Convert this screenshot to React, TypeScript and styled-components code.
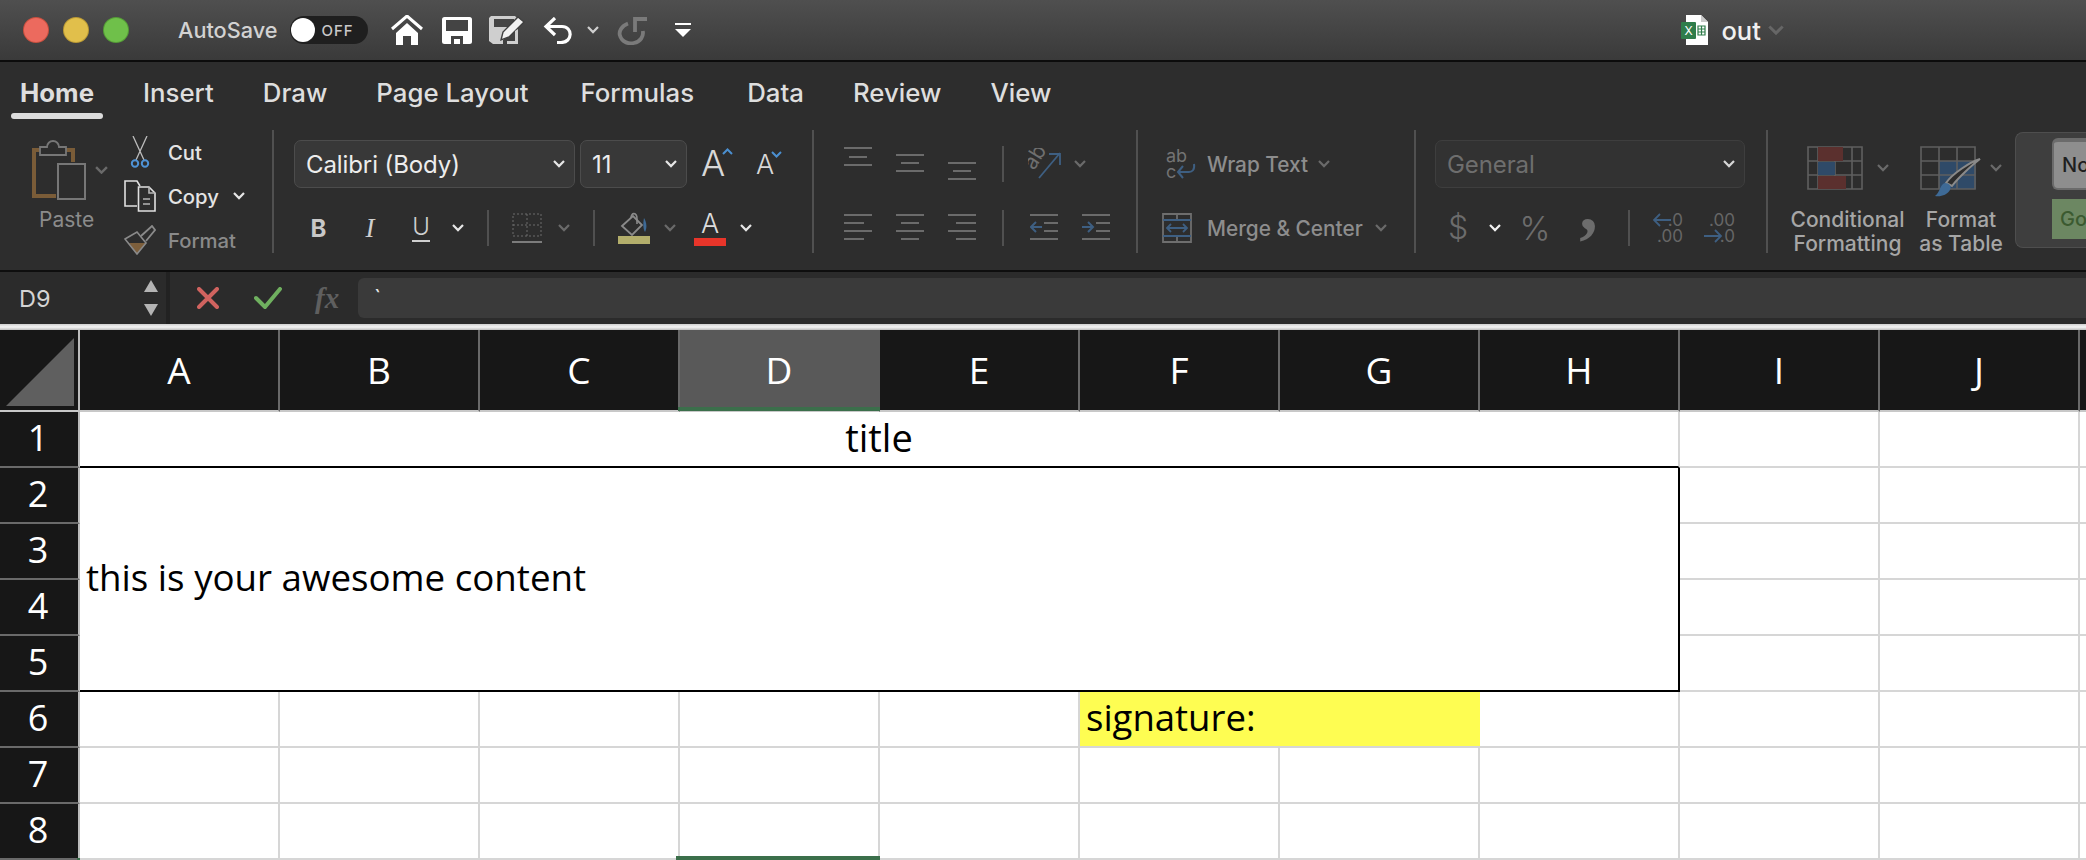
import React from "react";
import styled, { createGlobalStyle } from "styled-components";

const GlobalStyle = createGlobalStyle`
  html, body { margin: 0; padding: 0; background: #fff; }
  body { width: 2086px; height: 860px; overflow: hidden; font-family: Inter, "Liberation Sans", sans-serif; }
`;

const Window = styled.div`
  width: 2086px;
  height: 860px;
  overflow: hidden;
  display: flex;
  flex-direction: column;
`;

/* title bar */
const TitleBar = styled.div`
  height: 62px;
  flex: none;
  display: flex;
  align-items: center;
  padding-left: 24px;
  background: linear-gradient(#4f4f4f, #3a3a3a);
  border-bottom: 2px solid #0c0c0c;
  box-sizing: border-box;
`;
const Light = styled.span<{ $c: string; $e: string }>`
  width: 24px;
  height: 24px;
  border-radius: 50%;
  margin-right: 16px;
  background: ${(p) => p.$c};
  box-shadow: 0 0 0 1px ${(p) => p.$e};
`;
const AutoSave = styled.span`
  margin-left: 34px;
  font-size: 21.7px;
  font-weight: 500;
  color: #d2d2d2;
`;
const Toggle = styled.span`
  margin-left: 13px;
  width: 78px;
  height: 28px;
  border-radius: 14px;
  background: #1f1f1f;
  display: flex;
  align-items: center;
  position: relative;
  color: #c9c9c9;
  font-size: 15px;
  font-weight: 500;
  padding-left: 31px;
  box-sizing: border-box;
  letter-spacing: 1px;
  &::before {
    content: "";
    position: absolute;
    left: 1px;
    top: 2px;
    width: 24px;
    height: 24px;
    border-radius: 50%;
    background: #fff;
  }
`;
const QuickIcon = styled.span<{ $ml: number; $w: number }>`
  margin-left: ${(p) => p.$ml}px;
  width: ${(p) => p.$w}px;
  flex: none;
  display: flex;
  align-items: center;
  justify-content: center;
`;
const DocName = styled.span`
  margin-left: 12px;
  font-size: 25.5px;
  font-weight: 500;
  color: #f0f0f0;
`;

/* tabs */
const TabBar = styled.div`
  height: 60px;
  flex: none;
  display: flex;
  align-items: center;
  gap: 49px;
  padding: 0 0 0 20px;
  background: #2d2d2d;
  box-sizing: border-box;
`;
const Tab = styled.span<{ $active?: boolean; $ml?: number }>`
  position: relative;
  margin-left: ${(p) => p.$ml ?? 0}px;
  font-size: 25.8px;
  font-weight: ${(p) => (p.$active ? 700 : 500)};
  color: #dedede;
  white-space: nowrap;
  ${(p) =>
    p.$active &&
    `&::after {
      content: "";
      position: absolute;
      left: -9px;
      right: -9px;
      bottom: -11px;
      height: 6px;
      border-radius: 3px;
      background: #dcdcdc;
    }`}
`;

/* ribbon */
const Ribbon = styled.div`
  height: 148px;
  flex: none;
  display: flex;
  padding-top: 8px;
  box-sizing: border-box;
  background: #2d2d2d;
  overflow: hidden;
`;
const Group = styled.div<{ $w: number; $pl: number; $pt?: number; $last?: boolean }>`
  width: ${(p) => p.$w}px;
  height: 123px;
  flex: none;
  box-sizing: border-box;
  padding-left: ${(p) => p.$pl}px;
  padding-top: ${(p) => p.$pt ?? 0}px;
  border-right: ${(p) => (p.$last ? "none" : "2px solid #505050")};
`;
const Tools = styled.div<{ $h?: number; $mt?: number }>`
  display: flex;
  align-items: center;
  height: ${(p) => p.$h ?? 36}px;
  margin-top: ${(p) => p.$mt ?? 0}px;
`;
const Slot = styled.span<{ $ml?: number; $w: number; $start?: boolean }>`
  margin-left: ${(p) => p.$ml ?? 0}px;
  width: ${(p) => p.$w}px;
  flex: none;
  display: flex;
  align-items: center;
  justify-content: ${(p) => (p.$start ? "flex-start" : "center")};
`;
const MiniSep = styled.span<{ $ml: number }>`
  margin-left: ${(p) => p.$ml}px;
  width: 2px;
  height: 36px;
  flex: none;
  background: #505050;
`;
const Select = styled.div<{ $w: number; $ml?: number; $dim?: boolean }>`
  width: ${(p) => p.$w}px;
  margin-left: ${(p) => p.$ml ?? 0}px;
  height: 48px;
  flex: none;
  box-sizing: border-box;
  display: flex;
  align-items: center;
  justify-content: space-between;
  padding: 0 9px 0 11px;
  border-radius: 7px;
  background: ${(p) => (p.$dim ? "#323232" : "#383838")};
  border: 1px solid ${(p) => (p.$dim ? "#3e3e3e" : "#4c4c4c")};
  color: ${(p) => (p.$dim ? "#6e6e6e" : "#ededed")};
  font-size: 24px;
  letter-spacing: -0.1px;
`;
const ClipboardCol = styled.div<{ $ml?: number }>`
  display: flex;
  flex-direction: column;
  margin-left: ${(p) => p.$ml ?? 0}px;
`;
const PasteTop = styled.div`
  display: flex;
  align-items: center;
  gap: 9px;
  margin-top: 10px;
`;
const PasteLabel = styled.span`
  font-size: 21px;
  color: #8b8b8b;
  margin: 7px 0 0 7px;
`;
const ClipRow = styled.div`
  display: flex;
  align-items: center;
  height: 44px;
  gap: 12px;
`;
const ClipIcon = styled.span`
  width: 32px;
  display: flex;
  justify-content: center;
`;
const ClipLabel = styled.span<{ $dim?: boolean }>`
  font-size: 20.3px;
  font-weight: 500;
  color: ${(p) => (p.$dim ? "#8a8a8a" : "#e4e4e4")};
`;
const GroupRow = styled.div`
  display: flex;
`;
const BoldLetter = styled.span`
  font-size: 24px;
  font-weight: 700;
  color: #c8c8c8;
`;
const ItalicLetter = styled.span`
  font-family: "Liberation Serif", serif;
  font-style: italic;
  font-size: 27px;
  color: #cfcfcf;
`;
const UnderLetter = styled.span`
  font-size: 24px;
  font-weight: 300;
  line-height: 26px;
  color: #cfcfcf;
  border-bottom: 2px solid #cfcfcf;
  width: 100%;
  text-align: center;
`;
const ColorA = styled.span`
  display: flex;
  flex-direction: column;
  align-items: center;
  width: 100%;
  font-size: 27px;
  font-weight: 300;
  line-height: 28px;
  color: #dcdcdc;
  &::after {
    content: "";
    width: 100%;
    height: 8px;
    background: #e8352a;
  }
`;
const SizeLetter = styled.span<{ $s: number; $mt?: number }>`
  font-size: ${(p) => p.$s}px;
  font-weight: 300;
  line-height: 1;
  margin-top: ${(p) => p.$mt ?? 0}px;
  color: #d8d8d8;
`;
const FontSize = styled.span`
  display: flex;
  align-items: flex-start;
  & > svg {
    margin-left: -3px;
  }
`;
const WrapLabel = styled.span`
  font-size: 20.8px;
  font-weight: 500;
  color: #8d8d8d;
  white-space: nowrap;
`;
const NumGlyph = styled.span<{ $s: number }>`
  font-size: ${(p) => p.$s}px;
  font-weight: 300;
  line-height: 1;
  color: #6c6c6c;
`;
const CommaGlyph = styled.span`
  font-family: "Liberation Serif", serif;
  font-size: 74px;
  line-height: 36px;
  height: 36px;
  font-weight: 700;
  margin-top: -46px;
  color: #6c6c6c;
`;
const LargeButton = styled.div<{ $w: number }>`
  width: ${(p) => p.$w}px;
  flex: none;
  display: flex;
  flex-direction: column;
  align-items: center;
  margin-right: 16px;
`;
const LargeIcon = styled.div`
  display: flex;
  align-items: center;
  gap: 14px;
  height: 44px;
  margin-top: 16px;
`;
const LargeLabel = styled.div`
  font-size: 21px;
  font-weight: 500;
  line-height: 24px;
  color: #a6a6a6;
  text-align: center;
  white-space: nowrap;
  margin-top: 18px;
`;
const StylesPanel = styled.div`
  flex: 1;
  height: 116px;
  margin-top: 2px;
  box-sizing: border-box;
  padding: 5px 0 0 36px;
  background: #3e3e3e;
  border: 1px solid #4e4e4e;
  border-right: none;
  border-radius: 8px 0 0 8px;
  display: flex;
  flex-direction: column;
  gap: 9px;
`;
const NormalChip = styled.div`
  height: 52px;
  box-sizing: border-box;
  padding-left: 8px;
  display: flex;
  align-items: center;
  border-radius: 6px 0 0 6px;
  background: #8e8e8e;
  border: 2px solid #6b6b6b;
  border-top-width: 4px;
  border-right: none;
  color: #1f1f1f;
  font-size: 20px;
  font-weight: 500;
`;
const GoodChip = styled.div`
  height: 40px;
  padding-left: 8px;
  display: flex;
  align-items: center;
  background: #6c8762;
  color: #3b5a30;
  font-size: 20px;
  font-weight: 500;
`;

/* formula bar */
const FormulaBar = styled.div`
  height: 54px;
  flex: none;
  display: flex;
  align-items: center;
  background: #2b2b2b;
  border-top: 2px solid #0e0e0e;
  box-sizing: border-box;
`;
const NameBox = styled.div`
  width: 170px;
  height: 100%;
  flex: none;
  box-sizing: border-box;
  padding: 0 8px 0 19px;
  display: flex;
  align-items: center;
  justify-content: space-between;
  border-right: 4px solid #222;
  font-size: 23.5px;
  color: #d4d4d4;
`;
const Stepper = styled.span`
  display: flex;
  flex-direction: column;
  gap: 12px;
`;
const FxLabel = styled.span`
  margin-left: 33px;
  width: 30px;
  font-family: "Liberation Serif", serif;
  font-style: italic;
  font-weight: 700;
  font-size: 29px;
  color: #5f5f5f;
`;
const FormulaInput = styled.div`
  margin-left: 13px;
  flex: 1;
  height: 40px;
  padding-left: 16px;
  display: flex;
  align-items: center;
  background: #3a3a3a;
  border-radius: 6px 0 0 6px;
  font-size: 22px;
  color: #e8e8e8;
`;
const SheetEdge = styled.div`
  height: 6px;
  flex: none;
  background: linear-gradient(#cfcfcf, #f4f4f4 50%, #bdbdbd);
`;

/* sheet */
const Sheet = styled.div`
  flex: 1;
  display: grid;
  grid-template-columns: 80px repeat(11, 200px);
  grid-template-rows: 82px repeat(8, 56px);
  overflow: hidden;
  background: #fff;
  font-family: "Open Sans", Lato, sans-serif;
`;
const Corner = styled.div`
  background: #171717;
  box-sizing: border-box;
  border-right: 2px solid #bcbcbc;
  border-bottom: 2px solid #c8c8c8;
  display: flex;
  align-items: flex-end;
  padding: 0 4px 4px 6px;
`;
const ColHead = styled.div<{ $selected?: boolean }>`
  position: relative;
  box-sizing: border-box;
  display: flex;
  align-items: center;
  justify-content: center;
  padding-bottom: 2px;
  background: ${(p) => (p.$selected ? "#595959" : "#171717")};
  border-right: 2px solid ${(p) => (p.$selected ? "#595959" : "#696969")};
  border-bottom: 2px solid #c8c8c8;
  color: #fff;
  font-size: 37px;
  ${(p) =>
    p.$selected &&
    `&::after {
      content: "";
      position: absolute;
      left: -2px;
      right: -2px;
      bottom: -1px;
      height: 4px;
      background: #3b6f4b;
    }`}
`;
const RowHead = styled.div<{ $mark?: boolean }>`
  position: relative;
  box-sizing: border-box;
  display: flex;
  align-items: center;
  justify-content: center;
  padding: 0 2px 4px 0;
  background: #171717;
  border-right: 2px solid #bcbcbc;
  border-bottom: 2px solid #6a6a6a;
  color: #fff;
  font-size: 36px;
  ${(p) =>
    p.$mark &&
    `&::after {
      content: "";
      position: absolute;
      right: -2px;
      bottom: -2px;
      width: 3px;
      height: 2px;
      background: #3b6f4b;
    }`}
`;
const Cell = styled.div<{ $r: number; $c: number; $edge?: boolean }>`
  position: relative;
  box-sizing: border-box;
  grid-row: ${(p) => p.$r};
  grid-column: ${(p) => p.$c};
  border-right: 2px solid #d6d6d6;
  border-bottom: 2px solid #d6d6d6;
  ${(p) =>
    p.$edge &&
    `&::after {
      content: "";
      position: absolute;
      left: -4px;
      right: -2px;
      bottom: -2px;
      height: 4px;
      background: #3b6f4b;
    }`}
`;
const TitleCell = styled.div`
  grid-row: 2;
  grid-column: 2 / span 8;
  box-sizing: border-box;
  display: flex;
  align-items: center;
  justify-content: center;
  padding-bottom: 5px;
  border-bottom: 2px solid #000;
  border-right: 2px solid #d6d6d6;
  font-size: 38px;
  color: #000;
`;
const ContentCell = styled.div`
  grid-row: 3 / span 4;
  grid-column: 2 / span 8;
  box-sizing: border-box;
  display: flex;
  align-items: center;
  padding: 0 0 5px 6px;
  margin-left: -2px;
  border-left: 2px solid #000;
  border-right: 2px solid #000;
  border-bottom: 2px solid #000;
  font-size: 36.7px;
  color: #000;
`;
const SignatureCell = styled.div`
  grid-row: 7;
  grid-column: 7 / span 2;
  box-sizing: border-box;
  display: flex;
  align-items: center;
  margin-left: -2px;
  padding: 0 0 5px 8px;
  background: #fefd52;
  border-bottom: 2px solid #d6d6d6;
  font-size: 36.5px;
  color: #000;
`;

/* drawings */
const Chev = ({ c = "#cfcfcf", w = 12 }: { c?: string; w?: number }) => (
  <svg width={w} height={w * 0.6} viewBox="0 0 12 7" fill="none" stroke={c} strokeWidth="2.2">
    <path d="M1 1l5 5 5-5" />
  </svg>
);
const HomeIcon = () => (
  <svg width="32" height="30" viewBox="0 0 32 30" fill="#fff">
    <path d="M1 14 16 1l15 13" fill="none" stroke="#fff" strokeWidth="3" />
    <path d="M5 18 16 8l11 10v12h-7v-9h-8v9H5z" />
  </svg>
);
const SaveIcon = () => (
  <svg width="30" height="27" viewBox="0 0 30 27">
    <rect width="30" height="27" rx="2.5" fill="#fff" />
    <rect x="4" y="3" width="22" height="11" fill="#444" />
    <path d="M9 27v-8h12v8h-3v-5h-6v5z" fill="#444" />
  </svg>
);
const SaveEditIcon = () => (
  <svg width="36" height="28" viewBox="0 0 36 28">
    <path d="M2 0h24l3 3v8L14 24v4H4l-4-3V2z" fill="#cfcfcf" />
    <rect x="5" y="3" width="20" height="8" fill="#454545" />
    <path d="M29 1l6 5-15 15-8 3 2-8z" fill="#f2f2f2" stroke="#3f3f3f" strokeWidth="1.4" />
    <path d="M29 13v15H18v-3h8V15z" fill="#cfcfcf" />
  </svg>
);
const UndoIcon = () => (
  <svg width="30" height="27" viewBox="0 0 30 27" fill="none" stroke="#fff" strokeWidth="3.2">
    <path d="M12 1 3 9.500l9 8.500" />
    <path d="M3 9.500h16c11 0 11 16-1 16h-4" />
  </svg>
);
const RedoIcon = () => (
  <svg width="31" height="29" viewBox="0 0 31 29" fill="none" stroke="#7a7a7a" strokeWidth="3.8">
    <path d="M30 3H18v13" />
    <path d="M11 7.500C4 10 2 16 2.800 19c2 8 10 9 14 8 7-1.500 10-7 9-12" />
  </svg>
);
const MoreIcon = () => (
  <svg width="16" height="14" viewBox="0 0 16 14" fill="#fff">
    <rect width="16" height="2" />
    <path d="M0 6h16l-8 8z" />
  </svg>
);
const XlsIcon = () => (
  <svg width="28" height="30" viewBox="0 0 28 30">
    <path d="M5 0h15l7 7v23H5z" fill="#fff" />
    <path d="M20 0v7h7z" fill="#c9c9c9" />
    <rect y="7" width="15" height="17" rx="1" fill="#2f7d4b" />
    <text x="7.500" y="20" fontSize="12" fontFamily="Inter" fill="#fff" textAnchor="middle">X</text>
    <path d="M17 11h7v9h-7zM17 14h7M17 17h7M20.500 11v9" fill="none" stroke="#2f7d4b" strokeWidth="1.200" />
  </svg>
);
const PasteIcon = () => (
  <svg width="54" height="60" viewBox="0 0 54 60" fill="none">
    <path d="M8 10H2v46h22M34 10h7v12" stroke="#7a5c38" strokeWidth="4" />
    <path d="M8 15V7h7a6 6 0 0 1 12 0h7v8z" stroke="#777" strokeWidth="1.800" />
    <rect x="26" y="24" width="27" height="35" stroke="#777" strokeWidth="2" />
  </svg>
);
const ScissorsIcon = () => (
  <svg width="20" height="32" viewBox="0 0 20 32" fill="none">
    <path d="M3 0l11 24M17 0 6 24" stroke="#bdbdbd" strokeWidth="1.300" />
    <circle cx="5" cy="27.500" r="3.200" stroke="#4f93d6" strokeWidth="2" />
    <circle cx="15" cy="27.500" r="3.200" stroke="#4f93d6" strokeWidth="2" />
  </svg>
);
const CopyIcon = () => (
  <svg width="32" height="32" viewBox="0 0 32 32" fill="none" stroke="#e0e0e0" strokeWidth="1.600">
    <path d="M13 26H1V1h12l3 5" />
    <path d="M14.500 7H25l6 6v18H14.500z" />
    <path d="M25 7v6h6M19 19h7M19 24h7" stroke="#b5b5b5" />
  </svg>
);
const BrushIcon = () => (
  <svg width="32" height="30" viewBox="0 0 32 30" fill="none">
    <path d="M5 18l8 11 9-11z" fill="#7d5f3c" />
    <path d="M1 14 13 7l9 11-9 11z" stroke="#8a8a8a" strokeWidth="1.600" />
    <path d="M17 11 28 1l3 4-9 11" stroke="#8a8a8a" strokeWidth="1.800" />
  </svg>
);
const BordersIcon = () => (
  <svg width="30" height="30" viewBox="0 0 30 30" fill="none" stroke="#6d6d6d">
    <rect x="1" y="1" width="28" height="22" strokeDasharray="2 2" />
    <path d="M15 1v22M1 12h28" strokeDasharray="2 2" />
    <path d="M0 29h30" strokeWidth="2" stroke="#7c7c7c" />
  </svg>
);
const FillIcon = () => (
  <svg width="32" height="32" viewBox="0 0 32 32" fill="none">
    <path d="M4 14 15 4l9 9-10 10z" stroke="#8a8a8a" strokeWidth="1.800" />
    <path d="M13 6c0-6 6-6 6 1v5" stroke="#8a8a8a" strokeWidth="1.600" />
    <path d="M26 6c3 5 3 10 1 14-2-3-2-9-1-14z" fill="#3e6a96" />
    <rect y="24" width="32" height="8" fill="#b3ae6b" />
  </svg>
);
const Caret = ({ up }: { up?: boolean }) => (
  <svg width="11" height="7" viewBox="0 0 11 7" fill="none" stroke="#4b8fd0" strokeWidth="2">
    <path d={up ? "M1 6l4.500-4.500L10 6" : "M1 1l4.500 4.500L10 1"} />
  </svg>
);
const LinesIcon = ({ ys, align }: { ys: number[]; align: "left" | "center" | "right" }) => (
  <svg width="28" height="36" viewBox="0 0 28 36" stroke="#6b6b6b" strokeWidth="2">
    {ys.map((y, i) => {
      const short = i % 2 === 1;
      const x1 = !short || align === "left" ? 0 : align === "center" ? 5 : 8;
      const x2 = !short ? 28 : align === "left" ? 20 : align === "center" ? 23 : 28;
      return <line key={y} x1={x1} x2={x2} y1={y} y2={y} />;
    })}
  </svg>
);
const OrientIcon = () => (
  <svg width="34" height="32" viewBox="0 0 34 32" fill="none">
    <text x="0" y="0" transform="translate(6 23) rotate(-58)" fontFamily="Inter" fontSize="21" fill="#6f6f6f">ab</text>
    <path d="M11 30 32 5M21 6h11v11" stroke="#3e5f82" strokeWidth="1.800" />
  </svg>
);
const IndentIcon = ({ out }: { out?: boolean }) => (
  <svg width="28" height="36" viewBox="0 0 28 36" fill="none">
    <path d="M0 5h28M0 29h28M14 13h14M14 21h14" stroke="#6b6b6b" strokeWidth="2" />
    <path d={out ? "M12 17H1M6 12l-5 5 5 5" : "M0 17h11M6 12l5 5-5 5"} stroke="#3e5f82" strokeWidth="2" />
  </svg>
);
const WrapIcon = () => (
  <svg width="30" height="31" viewBox="0 0 30 31" fill="none">
    <text x="0" y="13" fontFamily="Inter" fontSize="18" fill="#737373">ab</text>
    <text x="0" y="29" fontFamily="Inter" fontSize="18" fill="#737373">c</text>
    <path d="M28 15c1 6-2 8-5 8H12M17 17l-5 6 5 6" stroke="#3e5f82" strokeWidth="2" />
  </svg>
);
const MergeIcon = () => (
  <svg width="30" height="30" viewBox="0 0 30 30" fill="none">
    <path d="M1 1h28v28H1zM1 7h28M1 23h28M15 1v6M15 23v6" stroke="#6e6e6e" strokeWidth="1.800" />
    <path d="M1 7h28M1 23h28" stroke="#3e5f82" strokeWidth="2" />
    <path d="M5 15h20M9 11l-4 4 4 4M21 11l4 4-4 4" stroke="#3e5f82" strokeWidth="1.800" />
  </svg>
);
const DecimalIcon = ({ more }: { more?: boolean }) => (
  <svg width="31" height="32" viewBox="0 0 31 32" fontFamily="Inter" fontSize="17" fill="#666">
    {more ? (
      <>
        <text x="31" y="14" textAnchor="end">.00</text>
        <text x="31" y="30" textAnchor="end">.0</text>
        <path d="M0 24h16M11 18l6 6-6 6" fill="none" stroke="#3e5f82" strokeWidth="1.800" />
      </>
    ) : (
      <>
        <text x="30" y="14" textAnchor="end">.0</text>
        <text x="30" y="30" textAnchor="end">.00</text>
        <path d="M18 8H1M7 2 1 8l6 6" fill="none" stroke="#3e5f82" strokeWidth="1.800" />
      </>
    )}
  </svg>
);
const CondIcon = () => (
  <svg width="56" height="44" viewBox="0 0 56 44">
    <path d="M1 1h54v42H1zM1 15h54M1 29h54M11 1v42M28 1v42M45 1v42" fill="none" stroke="#5f5f5f" strokeWidth="1.600" />
    <rect x="11" y="1" width="25" height="14" fill="#5b302e" />
    <rect x="11" y="16" width="17" height="13" fill="#2f4a68" />
    <rect x="11" y="30" width="28" height="13" fill="#5b302e" />
  </svg>
);
const TableIcon = () => (
  <svg width="56" height="44" viewBox="0 0 56 44" overflow="visible">
    <rect x="19" y="15" width="37" height="28" fill="#2f4a68" />
    <path d="M1 1h54v42H1zM1 15h54M1 29h54M19 1v42M37 1v42" fill="none" stroke="#5f5f5f" strokeWidth="1.600" />
    <path d="M60 13C52 19 38 32 32 40l-6-3C32 28 50 16 60 13z" fill="#2d2d2d" stroke="#8a8a8a" strokeWidth="2" />
    <path d="M25 37c4 0 7 3 5 7-3 5-9 7-15 6 5-3 5-12 10-13z" fill="#3e6a96" />
  </svg>
);
const StepArrow = ({ up }: { up?: boolean }) => (
  <svg width="14" height="12" viewBox="0 0 14 12" fill="#b4b4b4">
    <path d={up ? "M7 0l7 12H0z" : "M0 0h14L7 12z"} />
  </svg>
);
const CancelIcon = () => (
  <svg width="22" height="22" viewBox="0 0 22 22" stroke="#d0635f" strokeWidth="4" strokeLinecap="round">
    <path d="M2 2l18 18M20 2 2 20" />
  </svg>
);
const CheckIcon = () => (
  <svg width="28" height="22" viewBox="0 0 28 22" fill="none" stroke="#6fb05f" strokeWidth="4" strokeLinecap="round">
    <path d="M2 11l9 9L26 2" />
  </svg>
);

const columns = ["A", "B", "C", "D", "E", "F", "G", "H", "I", "J", "K"];
const rows = [1, 2, 3, 4, 5, 6, 7, 8];

export default function App() {
  return (
    <Window>
      <GlobalStyle />
      <TitleBar>
        <Light $c="#ec6a5e" $e="#c9503f" />
        <Light $c="#e1bf4b" $e="#bb9a35" />
        <Light $c="#6fc04a" $e="#559c37" />
        <AutoSave>AutoSave</AutoSave>
        <Toggle>OFF</Toggle>
        <QuickIcon $ml={23} $w={32}><HomeIcon /></QuickIcon>
        <QuickIcon $ml={19} $w={30}><SaveIcon /></QuickIcon>
        <QuickIcon $ml={17} $w={36}><SaveEditIcon /></QuickIcon>
        <QuickIcon $ml={18} $w={30}><UndoIcon /></QuickIcon>
        <QuickIcon $ml={13} $w={13}><Chev w={12} /></QuickIcon>
        <QuickIcon $ml={18} $w={31}><RedoIcon /></QuickIcon>
        <QuickIcon $ml={27} $w={16}><MoreIcon /></QuickIcon>
        <QuickIcon $ml={990} $w={28}><XlsIcon /></QuickIcon>
        <DocName>out</DocName>
        <QuickIcon $ml={7} $w={16}><Chev c="#666" w={16} /></QuickIcon>
      </TitleBar>

      <TabBar>
        <Tab $active>Home</Tab>
        <Tab>Insert</Tab>
        <Tab>Draw</Tab>
        <Tab>Page Layout</Tab>
        <Tab $ml={3}>Formulas</Tab>
        <Tab $ml={4}>Data</Tab>
        <Tab>Review</Tab>
        <Tab>View</Tab>
      </TabBar>

      <Ribbon>
        <Group $w={274} $pl={32}>
          <GroupRow>
            <ClipboardCol>
              <PasteTop>
                <PasteIcon />
                <Chev c="#6a6a6a" w={13} />
              </PasteTop>
              <PasteLabel>Paste</PasteLabel>
            </ClipboardCol>
            <ClipboardCol $ml={16}>
              <ClipRow>
                <ClipIcon><ScissorsIcon /></ClipIcon>
                <ClipLabel>Cut</ClipLabel>
              </ClipRow>
              <ClipRow>
                <ClipIcon><CopyIcon /></ClipIcon>
                <ClipLabel>Copy</ClipLabel>
                <Slot $ml={2} $w={12}><Chev c="#e6e6e6" /></Slot>
              </ClipRow>
              <ClipRow>
                <ClipIcon><BrushIcon /></ClipIcon>
                <ClipLabel $dim>Format</ClipLabel>
              </ClipRow>
            </ClipboardCol>
          </GroupRow>
        </Group>

        <Group $w={540} $pl={20} $pt={10}>
          <Tools $h={48}>
            <Select $w={281}>Calibri (Body)<Chev c="#e6e6e6" /></Select>
            <Select $w={107} $ml={5}>11<Chev c="#e6e6e6" /></Select>
            <Slot $ml={14} $w={32}>
              <FontSize><SizeLetter $s={36} $mt={-3}>A</SizeLetter><Caret up /></FontSize>
            </Slot>
            <Slot $ml={22} $w={28}>
              <FontSize><SizeLetter $s={27}>A</SizeLetter><Caret /></FontSize>
            </Slot>
          </Tools>
          <Tools $mt={22}>
            <Slot $ml={17} $w={15}><BoldLetter>B</BoldLetter></Slot>
            <Slot $ml={38} $w={12}><ItalicLetter>I</ItalicLetter></Slot>
            <Slot $ml={36} $w={18}><UnderLetter>U</UnderLetter></Slot>
            <Slot $ml={21} $w={13}><Chev c="#e6e6e6" /></Slot>
            <MiniSep $ml={23} />
            <Slot $ml={23} $w={30}><BordersIcon /></Slot>
            <Slot $ml={15} $w={13}><Chev c="#6a6a6a" /></Slot>
            <MiniSep $ml={23} />
            <Slot $ml={23} $w={32}><FillIcon /></Slot>
            <Slot $ml={13} $w={13}><Chev c="#6a6a6a" /></Slot>
            <Slot $ml={18} $w={32}><ColorA>A</ColorA></Slot>
            <Slot $ml={14} $w={12}><Chev c="#e6e6e6" /></Slot>
          </Tools>
        </Group>

        <Group $w={324} $pl={30} $pt={16}>
          <Tools>
            <LinesIcon ys={[2, 11, 19]} align="center" />
            <Slot $ml={24} $w={28}><LinesIcon ys={[9, 17, 25]} align="center" /></Slot>
            <Slot $ml={24} $w={28}><LinesIcon ys={[17, 25, 33]} align="center" /></Slot>
            <MiniSep $ml={26} />
            <Slot $ml={24} $w={34}><OrientIcon /></Slot>
            <Slot $ml={12} $w={12}><Chev c="#6a6a6a" /></Slot>
          </Tools>
          <Tools $mt={28}>
            <LinesIcon ys={[5, 13, 21, 29]} align="left" />
            <Slot $ml={24} $w={28}><LinesIcon ys={[5, 13, 21, 29]} align="center" /></Slot>
            <Slot $ml={24} $w={28}><LinesIcon ys={[5, 13, 21, 29]} align="right" /></Slot>
            <MiniSep $ml={26} />
            <Slot $ml={26} $w={28}><IndentIcon out /></Slot>
            <Slot $ml={24} $w={28}><IndentIcon /></Slot>
          </Tools>
        </Group>

        <Group $w={278} $pl={24} $pt={16}>
          <Tools>
            <Slot $ml={4} $w={30}><WrapIcon /></Slot>
            <Slot $ml={11} $w={100} $start><WrapLabel>Wrap Text</WrapLabel></Slot>
            <Slot $ml={11} $w={12}><Chev c="#6a6a6a" /></Slot>
          </Tools>
          <Tools $mt={28}>
            <Slot $w={30}><MergeIcon /></Slot>
            <Slot $ml={15} $w={158} $start><WrapLabel>Merge &amp; Center</WrapLabel></Slot>
            <Slot $ml={10} $w={12}><Chev c="#6a6a6a" /></Slot>
          </Tools>
        </Group>

        <Group $w={352} $pl={19} $pt={10}>
          <Tools $h={48}>
            <Select $w={310} $dim>General<Chev c="#d6d6d6" /></Select>
          </Tools>
          <Tools $mt={22}>
            <Slot $ml={15} $w={16}><NumGlyph $s={32}>$</NumGlyph></Slot>
            <Slot $ml={23} $w={12}><Chev c="#f2f2f2" /></Slot>
            <Slot $ml={19} $w={30}><NumGlyph $s={33}>%</NumGlyph></Slot>
            <Slot $ml={31} $w={15}><CommaGlyph>,</CommaGlyph></Slot>
            <MiniSep $ml={32} />
            <Slot $ml={23} $w={31}><DecimalIcon /></Slot>
            <Slot $ml={20} $w={31}><DecimalIcon more /></Slot>
          </Tools>
        </Group>

        <Group $w={247} $pl={23} $last>
          <GroupRow>
            <LargeButton $w={113}>
              <LargeIcon><CondIcon /><Chev c="#6a6a6a" /></LargeIcon>
              <LargeLabel>Conditional<br />Formatting</LargeLabel>
            </LargeButton>
            <LargeButton $w={82}>
              <LargeIcon><TableIcon /><Chev c="#6a6a6a" /></LargeIcon>
              <LargeLabel>Format<br />as Table</LargeLabel>
            </LargeButton>
          </GroupRow>
        </Group>

        <StylesPanel>
          <NormalChip>Normal</NormalChip>
          <GoodChip>Good</GoodChip>
        </StylesPanel>
      </Ribbon>

      <FormulaBar>
        <NameBox>
          D9
          <Stepper><StepArrow up /><StepArrow /></Stepper>
        </NameBox>
        <Slot $ml={27} $w={22}><CancelIcon /></Slot>
        <Slot $ml={35} $w={28}><CheckIcon /></Slot>
        <FxLabel>fx</FxLabel>
        <FormulaInput>`</FormulaInput>
      </FormulaBar>
      <SheetEdge />

      <Sheet>
        <Corner>
          <svg width="68" height="68" viewBox="0 0 68 68"><path d="M68 0v68H0z" fill="#5f5f5f" /></svg>
        </Corner>
        {columns.map((c) => (
          <ColHead key={c} $selected={c === "D"}>{c}</ColHead>
        ))}
        <TitleCell>title</TitleCell>
        <ContentCell>this is your awesome content</ContentCell>
        <SignatureCell>signature:</SignatureCell>
        {rows.map((r) => (
          <React.Fragment key={r}>
            <RowHead $mark={r === 8}>{r}</RowHead>
            {columns.map((c, i) => {
              if ((r <= 5 && i < 8) || (r === 6 && (c === "F" || c === "G"))) return null;
              return <Cell key={c} $r={r + 1} $c={i + 2} $edge={r === 8 && c === "D"} />;
            })}
          </React.Fragment>
        ))}
      </Sheet>
    </Window>
  );
}
